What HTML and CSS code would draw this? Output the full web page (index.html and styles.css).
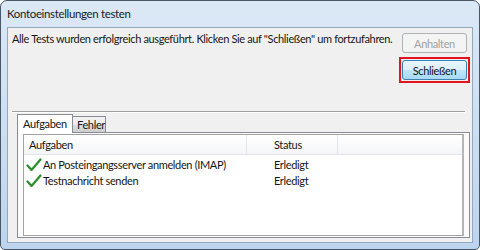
FILE: index.html
```html
<!DOCTYPE html>
<html lang="de">
<head>
  <meta charset="UTF-8" />
  <title>Kontoeinstellungen testen</title>
  <link rel="stylesheet" href="styles.css">
</head>
<body>

  <div class="window">
    <div class="titlebar">Kontoeinstellungen testen</div>

    <div class="client">
      <div class="top">
        <div class="message">Alle Tests wurden erfolgreich ausgeführt. Klicken Sie auf "Schließen" um fortzufahren.</div>
        <div class="buttons">
          <button class="btn" disabled>Anhalten</button>
          <div class="focus-ring">
            <button class="btn btn-default">Schließen</button>
          </div>
        </div>
      </div>

      <div class="separator"></div>

      <div class="tabs">
        <div class="tab active">Aufgaben</div>
        <div class="tab">Fehler</div>
      </div>

      <div class="panel">
        <div class="listview">
          <div class="lv-head">
            <div class="col col-task">Aufgaben</div>
            <div class="col col-status">Status</div>
            <div class="col col-rest"></div>
          </div>
          <div class="lv-row">
            <div class="col col-task">
              <svg class="check" width="16" height="14" viewBox="0 0 16 14"><path d="M1.5 7.5 L5.5 12 L14.5 1.5" /></svg>
              <span>An Posteingangsserver anmelden (IMAP)</span>
            </div>
            <div class="col col-status">Erledigt</div>
          </div>
          <div class="lv-row">
            <div class="col col-task">
              <svg class="check" width="16" height="14" viewBox="0 0 16 14"><path d="M1.5 7.5 L5.5 12 L14.5 1.5" /></svg>
              <span>Testnachricht senden</span>
            </div>
            <div class="col col-status">Erledigt</div>
          </div>
        </div>
      </div>
    </div>
  </div>

</body>
</html>
```

FILE: styles.css
```css
* {
  box-sizing: border-box;
}

body {
  margin: 0;
  width: 480px;
  height: 250px;
  background: #fff;
  font-family: Lato, "Noto Sans", sans-serif;
  font-size: 11px;
  letter-spacing: -0.35px;
  color: #161616;
}

.window {
  width: 480px;
  height: 250px;
  border: 1px solid #4a5664;
  border-radius: 7px 7px 5px 5px;
  background: linear-gradient(180deg, #dbe8f6 0%, #cfe1f4 40%, #bcd4ee 100%);
  padding: 0 6px 6px 6px;
  display: flex;
  flex-direction: column;
}

.titlebar {
  height: 26px;
  line-height: 25px;
  font-size: 11.5px;
  color: #1b1b1b;
  white-space: nowrap;
}

.client {
  flex: 1;
  background: #f0f0f0;
  border: 1px solid #95a7bb;
  padding: 0 5px 4px 4px;
  display: flex;
  flex-direction: column;
}

.top {
  height: 83px;
  display: flex;
  justify-content: space-between;
}

.message {
  padding-top: 4px;
  line-height: 14px;
  white-space: nowrap;
}

.buttons {
  display: flex;
  flex-direction: column;
  gap: 7px;
  padding-top: 5px;
}

.btn {
  display: block;
  width: 65px;
  height: 20px;
  font-family: inherit;
  font-size: 11px;
  letter-spacing: inherit;
  padding: 0;
  border: 1px solid #707070;
  border-radius: 3px;
  background: linear-gradient(180deg, #f2f2f2 0%, #ebebeb 50%, #dddddd 51%, #cfcfcf 100%);
  color: #161616;
}

.btn:disabled {
  border-color: #adb2b5;
  background: #f4f4f4;
  color: #a2a2a2;
}

.btn-default {
  border-color: #3c7fb1;
  background: linear-gradient(180deg, #eaf6fd 0%, #d9f0fc 50%, #bee6fd 51%, #a7d9f5 100%);
}

/* red marker drawn round the default button */
.focus-ring {
  margin: -3px -3px 0 -3px;
  padding: 1px;
  border: 2px solid #e3141c;
}

.separator {
  height: 2px;
  margin-right: 2px;
  border-top: 1px solid #a0a0a0;
  border-bottom: 1px solid #ffffff;
}

.tabs {
  display: flex;
  align-items: flex-end;
  margin: 1px 0 0 5px;
  height: 18px;
  position: relative;
  z-index: 1;
}

.tab {
  height: 16px;
  line-height: 15px;
  padding: 0 4px;
  border: 1px solid #898c95;
  border-bottom: none;
  background: linear-gradient(180deg, #f2f2f2 0%, #ebebeb 50%, #dddddd 51%, #cfcfcf 100%);
  margin-left: -1px;
}

.tab.active {
  width: 56px;
  height: 19px;
  margin-bottom: -1px;
  padding: 0 5px;
  line-height: 17px;
  background: #fff;
  margin-left: 0;
  position: relative;
  z-index: 2;
}

.tab:not(.active) {
  width: 34px;
}

.panel {
  flex: 1;
  margin: 0 0 0 5px;
  width: 453px;
  border: 1px solid #898c95;
  background: #fbfbfb;
  padding: 1px 5px 1px 5px;
}

.listview {
  height: 100%;
  border: 1px solid #a3a3a3;
  border-right: 2px solid #b5b5b5;
  background: #fff;
}

.lv-head {
  display: flex;
  height: 20px;
  line-height: 19px;
  border-bottom: 1px solid #e2e4e7;
  background: linear-gradient(180deg, #ffffff 0%, #f5f6f8 100%);
}

.lv-head .col {
  border-right: 1px solid #e3e5e8;
}

.lv-head .col-rest {
  border-right: none;
}

.col-task {
  width: 223px;
  padding-left: 5px;
  display: flex;
  align-items: center;
  white-space: nowrap;
}

.col-status {
  width: 91px;
  padding-left: 27px;
}

.col-rest {
  flex: 1;
}

.lv-row {
  display: flex;
  height: 16px;
  line-height: 16px;
}

.lv-head + .lv-row {
  margin-top: 2px;
}

.lv-row .col-task {
  padding-left: 2px;
}

.check {
  margin-right: 1px;
  flex: none;
}

.check path {
  fill: none;
  stroke: #2b8f2b;
  stroke-width: 2.2;
  stroke-linecap: round;
  stroke-linejoin: round;
}
```
